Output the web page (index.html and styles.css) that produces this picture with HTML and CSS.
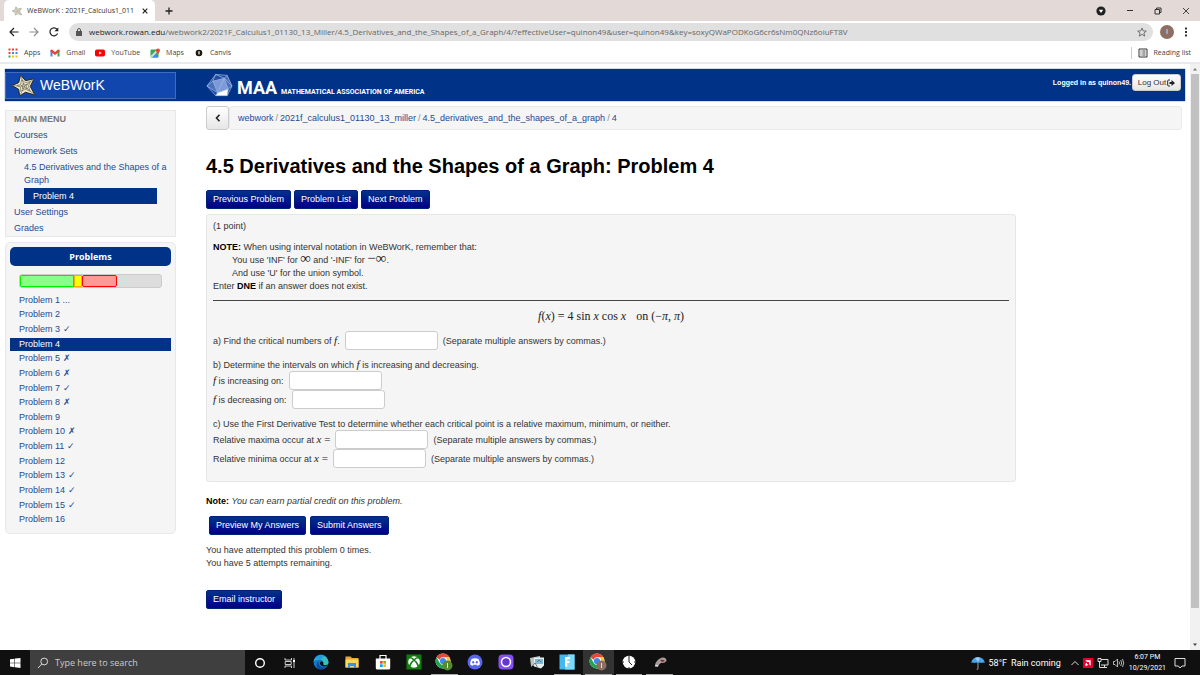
FILE: index.html
```html
<!DOCTYPE html>
<html lang="en">
<head>
<meta charset="utf-8">
<title>WeBWorK : 2021F_Calculus1_01130_13_Miller</title>
<link rel="stylesheet" href="styles.css">
</head>
<body>
<svg class="defs" aria-hidden="true">
  <symbol id="web" viewBox="0 0 26 24">
    <path d="M10 1 15 7 24 5 20 13 25 22 15 19 9 23 8 16 1 12 8 9Z" fill="#f1ecd2" stroke="#26221a" stroke-width="1"/>
    <path d="M10 1 14 13M24 5 14 13M25 22 14 13M9 23 14 13M1 12 14 13M11 6 15 9 20 8 18 13 20 18 15 16 10 18 10 14 6 12 10 11ZM12.500 10 15 11 17 10.500 16 13 17 15.500 14 14.500 12 15.500 12 13 10.500 12 12.500 11.500Z" fill="none" stroke="#6a644c" stroke-width=".7"/>
  </symbol>
  <symbol id="chrome" viewBox="0 0 18 18">
    <circle cx="8" cy="8" r="7.500" fill="#fff"/>
    <path d="M1.500 4.300A7.500 7.500 0 0 1 14.500 4.300H8A3.700 3.700 0 0 0 4.600 6.700Z" fill="#e6483a"/>
    <path d="M14.500 4.300A7.500 7.500 0 0 1 8 15.500L11.200 10A3.700 3.700 0 0 0 10 4.300Z" fill="#f9c82d"/>
    <path d="M1.500 4.300A7.500 7.500 0 0 0 8 15.500L11.200 9.900A3.700 3.700 0 0 1 4.800 9.900Z" fill="#26a353"/>
    <circle cx="8" cy="8" r="3.100" fill="#4285f4"/>
  </symbol>
</svg>

<header class="browser">
  <div class="tabs">
    <div class="tab">
      <svg class="i10 faded" viewBox="0 0 26 24"><use href="#web"/></svg>
      <span class="tab-title">WeBWorK : 2021F_Calculus1_011</span>
      <button class="plain" aria-label="Close tab"><svg class="i6" viewBox="0 0 6 6"><path d="M.7.7 5.300 5.300M5.300.7.7 5.300" stroke="#222" stroke-width="1.200"/></svg></button>
    </div>
    <button class="plain new-tab" aria-label="New tab"><svg class="i8" viewBox="0 0 8 8"><path d="M4 .5v7M.5 4h7" stroke="#222" stroke-width="1.300"/></svg></button>
    <div class="window-controls">
      <svg class="i10" viewBox="0 0 10 10"><circle cx="5" cy="5" r="4.600" fill="#1f2023"/><path d="M2.800 3.800h4.400L5 7Z" fill="#fff"/></svg>
      <button class="plain" aria-label="Minimize"><svg class="i8" viewBox="0 0 8 8"><path d="M1 3.500h6" stroke="#333"/></svg></button>
      <button class="plain" aria-label="Restore"><svg class="i8" viewBox="0 0 8 8"><path d="M1 2.500h4.500V7H1ZM2.500 2.500V1H7v4.500H5.500" fill="none" stroke="#333"/></svg></button>
      <button class="plain" aria-label="Close"><svg class="i8" viewBox="0 0 8 8"><path d="M1 1 7 7M7 1 1 7" stroke="#333" stroke-width=".9"/></svg></button>
    </div>
  </div>
  <div class="toolbar">
    <button class="plain" aria-label="Back"><svg class="i10" viewBox="0 0 10 10"><path d="M9.500 5H1M5 1 1 5 5 9" fill="none" stroke="#222" stroke-width="1.200"/></svg></button>
    <button class="plain" aria-label="Forward"><svg class="i10" viewBox="0 0 10 10"><path d="M.5 5H9M5 1 9 5 5 9" fill="none" stroke="#909090" stroke-width="1.200"/></svg></button>
    <button class="plain" aria-label="Reload"><svg class="i10" viewBox="0 0 10 10"><path d="M8.600 6.500A4 4 0 1 1 8 2.200" fill="none" stroke="#222" stroke-width="1.200"/><path d="M9.300.4V4.300H5.400Z" fill="#222"/></svg></button>
    <div class="address">
      <svg class="i8" viewBox="0 0 8 8"><path d="M1 3h6v5H1Z" fill="#555"/><path d="M2.500 3.500V2a1.500 1.500 0 0 1 3 0v1.500" fill="none" stroke="#555"/></svg>
      <span class="url"><b>webwork.rowan.edu</b>/webwork2/2021F_Calculus1_01130_13_Miller/4.5_Derivatives_and_the_Shapes_of_a_Graph/4/?effectiveUser=quinon49&amp;user=quinon49&amp;key=soxyQWaPODKoG6cr6sNm0QNz6oiuFT8V</span>
      <svg class="i10" viewBox="0 0 10 10"><path d="M5 1 6.200 3.900 9.300 4.100 6.900 6.100 7.700 9.100 5 7.400 2.300 9.100 3.100 6.100.7 4.100 3.800 3.900Z" fill="none" stroke="#555" stroke-width=".8"/></svg>
    </div>
    <span class="avatar">I</span>
    <button class="plain" aria-label="Browser menu"><svg class="i10" viewBox="0 0 10 10"><path d="M4 .5h2v2H4ZM4 4h2v2H4ZM4 7.500h2v2H4Z" fill="#333"/></svg></button>
  </div>
  <nav class="bookmarks">
    <a href="#apps"><svg class="i10" viewBox="0 0 10 10"><path d="M.5.5h2v2h-2ZM4 .5h2v2H4Z" fill="#ea4335"/><path d="M7.500.5h2v2h-2ZM.5 4h2v2h-2Z" fill="#e5473a"/><path d="M4 4h2v2H4ZM7.500 4h2v2h-2Z" fill="#4285f4"/><path d="M.5 7.500h2v2h-2Z" fill="#34a853"/><path d="M4 7.500h2v2H4ZM7.500 7.500h2v2h-2Z" fill="#fbbc04"/></svg>Apps</a>
    <a href="#gmail"><svg class="i10" viewBox="0 0 10 10"><path d="M.5 2v6.500h2V4Z" fill="#4285f4"/><path d="M9.500 2v6.500h-2V4Z" fill="#34a853"/><path d="M.5 2 2 1.500 5 4 8 1.500 9.500 2v1.500L5 7 .5 3.500Z" fill="#ea4335"/></svg>Gmail</a>
    <a href="#youtube"><svg class="i10" viewBox="0 0 10 10"><rect y="1.500" width="10" height="7" rx="1.800" fill="#f00"/><path d="M4 3.500 6.800 5 4 6.500Z" fill="#fff"/></svg>YouTube</a>
    <a href="#maps"><svg class="i10" viewBox="0 0 10 10"><rect x=".5" y="1.500" width="8" height="8" rx="1" fill="#34a853"/><path d="M1 9.500 5 5.500 8.500 9.500Z" fill="#4285f4"/><path d="M.5 8 6 2.500 7.500 4 2 9.500H.5Z" fill="#c9d8e8"/><path d="M8 6.500C7.700 4.800 6 4 6 2.400a2 2 0 0 1 4 0C10 4 8.300 4.800 8 6.500Z" fill="#ea4335"/></svg>Maps</a>
    <a href="#canvis"><svg class="i10" viewBox="0 0 10 10"><circle cx="5" cy="5" r="3.300" fill="#1c1710"/><path d="M4.300 3.300h1.400v2.400L5 7l-.7-1.300Z" fill="#f4e6c0"/></svg>Canvis</a>
    <a class="reading" href="#reading"><svg class="i10" viewBox="0 0 10 10"><path d="M1 1h8v8H1Z" fill="none" stroke="#333"/><path d="M2.500 3h1M2.500 5h1M2.500 7h1M4.300 3h3.200M4.300 5h3.200M4.300 7h3.200" stroke="#333" stroke-width=".9"/></svg>Reading list</a>
  </nav>
</header>

<div class="viewport">
  <div class="page">
    <header class="masthead">
      <a class="logo" href="#home"><svg class="logo-web" viewBox="0 0 26 24"><use href="#web"/></svg>WeBWorK</a>
      <a class="maa" href="#maa">
        <svg class="maa-mark" viewBox="0 0 28 25"><path d="M10 1 22 2 27 13 22 23H10L1 13Z" fill="#1e4da0"/><path d="M7 8 19 5 23 16 12 20Z" fill="#7c9ad8"/><path d="M19 5 22 2 27 13 23 16ZM7 8 1 13 12 20Z" fill="#4a70bd"/><path d="M12 20 23 16 22 23H10Z" fill="#fff"/><path d="M10 1 22 2 27 13 22 23H10L1 13ZM10 1 7 8 19 5 22 2M7 8 1 13 12 20 7 8M19 5 12 20 23 16 19 5M23 16 27 13M10 1 19 5 27 13M12 20 10 23M23 16 22 23" fill="none" stroke="#a9bde6" stroke-width=".7"/></svg>
        <span class="maa-big">MAA</span><span class="maa-name">MATHEMATICAL ASSOCIATION OF AMERICA</span>
      </a>
      <div class="session">Logged in as quinon49.
        <button class="btn-light">Log Out<svg class="i8" viewBox="0 0 8 8"><path d="M3 1H1.500Q.7 1 .7 2v4q0 1 .8 1H3" fill="none" stroke="#222"/><path d="M2.500 3h2V1L8 4 4.500 7V5h-2Z" fill="#222"/></svg></button>
      </div>
    </header>

    <div class="columns">
      <aside class="sidebar">
        <nav class="menu">
          <h2>MAIN MENU</h2>
          <ul>
            <li><a href="#courses">Courses</a></li>
            <li><a href="#sets">Homework Sets</a></li>
            <li class="sub"><a href="#set">4.5 Derivatives and the Shapes of a Graph</a></li>
            <li class="sub current"><a href="#p4">Problem 4</a></li>
            <li><a href="#settings">User Settings</a></li>
            <li><a href="#grades">Grades</a></li>
          </ul>
        </nav>
        <nav class="problems">
          <h2>Problems</h2>
          <div class="progress"><span class="done"></span><span class="pending"></span><span class="wrong"></span></div>
          <ul>
            <li><a href="#p1">Problem 1 ...</a></li>
            <li><a href="#p2">Problem 2</a></li>
            <li><a href="#p3">Problem 3 ✓</a></li>
            <li class="current"><a href="#p4">Problem 4</a></li>
            <li><a href="#p5">Problem 5 ✗</a></li>
            <li><a href="#p6">Problem 6 ✗</a></li>
            <li><a href="#p7">Problem 7 ✓</a></li>
            <li><a href="#p8">Problem 8 ✗</a></li>
            <li><a href="#p9">Problem 9</a></li>
            <li><a href="#p10">Problem 10 ✗</a></li>
            <li><a href="#p11">Problem 11 ✓</a></li>
            <li><a href="#p12">Problem 12</a></li>
            <li><a href="#p13">Problem 13 ✓</a></li>
            <li><a href="#p14">Problem 14 ✓</a></li>
            <li><a href="#p15">Problem 15 ✓</a></li>
            <li><a href="#p16">Problem 16</a></li>
          </ul>
        </nav>
      </aside>

      <main class="main">
        <div class="crumbs">
          <button class="btn-light back" aria-label="Up one level"><svg class="i8" viewBox="0 0 8 8"><path d="M5.500.8 2.500 4l3 3.200" fill="none" stroke="#222" stroke-width="1.600"/></svg></button>
          <nav class="trail"><a href="#webwork">webwork</a><i>/</i><a href="#course">2021f_calculus1_01130_13_miller</a><i>/</i><a href="#set">4.5_derivatives_and_the_shapes_of_a_graph</a><i>/</i><a href="#p4">4</a></nav>
        </div>
        <h1>4.5 Derivatives and the Shapes of a Graph: Problem 4</h1>
        <div class="buttons">
          <button class="btn">Previous Problem</button><button class="btn">Problem List</button><button class="btn">Next Problem</button>
        </div>

        <form class="problem">
          <p class="points">(1 point)</p>
          <p><strong>NOTE:</strong> When using interval notation in WeBWorK, remember that:</p>
          <p class="indent">You use 'INF' for <span class="m inf">∞</span> and '-INF' for <span class="m inf">−∞</span>.</p>
          <p class="indent">And use 'U' for the union symbol.</p>
          <p>Enter <strong>DNE</strong> if an answer does not exist.</p>
          <hr>
          <p class="formula"><i>f</i>(<i>x</i>) = 4 sin <i>x</i> cos <i>x</i><span class="quad"></span>on (−<i>π</i>, <i>π</i>)</p>
          <div class="row"><label for="crit">a) Find the critical numbers of <i class="m">f</i>.</label><input id="crit" type="text"><span>(Separate multiple answers by commas.)</span></div>
          <p class="part">b) Determine the intervals on which <i class="m">f</i> is increasing and decreasing.</p>
          <div class="row"><label for="inc"><i class="m">f</i> is increasing on:</label><input id="inc" type="text"></div>
          <div class="row"><label for="dec"><i class="m">f</i> is decreasing on:</label><input id="dec" type="text"></div>
          <p class="part">c) Use the First Derivative Test to determine whether each critical point is a relative maximum, minimum, or neither.</p>
          <div class="row"><label for="max">Relative maxima occur at <span class="m"><i>x</i> =</span></label><input id="max" type="text"><span>(Separate multiple answers by commas.)</span></div>
          <div class="row"><label for="min">Relative minima occur at <span class="m"><i>x</i> =</span></label><input id="min" type="text"><span>(Separate multiple answers by commas.)</span></div>
        </form>

        <p class="note"><strong>Note:</strong> <em>You can earn partial credit on this problem.</em></p>
        <div class="buttons submit">
          <button class="btn">Preview My Answers</button><button class="btn">Submit Answers</button>
        </div>
        <p>You have attempted this problem 0 times.<br>You have 5 attempts remaining.</p>
        <div class="buttons email"><button class="btn">Email instructor</button></div>
      </main>
    </div>
  </div>
  <div class="scrollbar">
    <svg class="i6" viewBox="0 0 6 6"><path d="M1 4.500 3 2l2 2.500Z" fill="#777"/></svg>
    <span class="thumb"></span>
    <svg class="i6" viewBox="0 0 6 6"><path d="M1 1.500 3 4l2-2.500Z" fill="#444"/></svg>
  </div>
</div>

<footer class="taskbar">
  <button class="plain start" aria-label="Start"><svg class="i12" viewBox="0 0 12 12"><path d="M1 2.300 5.500 1.700v4H1ZM6 1.600 11.500.9v4.800H6ZM1 6.200h4.500v4L1 9.600ZM6 6.200h5.500V11L6 10.300Z" fill="#fff"/></svg></button>
  <label class="search"><svg class="i12" viewBox="0 0 12 12"><circle cx="7.200" cy="4.500" r="3.400" fill="none" stroke="#ddd"/><path d="M4.800 7 1 11" stroke="#ddd"/></svg><input type="text" placeholder="Type here to search" aria-label="Type here to search"></label>
  <div class="tools">
    <button class="plain" aria-label="Cortana"><svg class="i12" viewBox="0 0 12 12"><circle cx="6" cy="6" r="4.300" fill="none" stroke="#fff" stroke-width="1.400"/></svg></button>
    <button class="plain" aria-label="Task view"><svg class="i12" viewBox="0 0 12 12"><path d="M1 1v2h6.500V1M1.200 4.500h6v3h-6ZM1 11V9h6.500v2M10 1v10" fill="none" stroke="#ccc"/><path d="M9 3h2v2H9Z" fill="#fff"/></svg></button>
  </div>
  <div class="apps">
    <button class="plain" aria-label="Edge"><svg class="i16" viewBox="0 0 16 16"><circle cx="8" cy="8" r="7.500" fill="#1576cc"/><path d="M.6 8A7.500 7.500 0 0 1 15.500 8c0 2.500-2 3.500-4 3.300-1.700-.2-1.800-1-1.300-1.800C11 7.500 9 5.500 6.500 5.500 3.500 5.500 1 6.500.6 8Z" fill="#35c1b8"/><path d="M.6 7.500C1.500 4.500 5.500 4 8 5.500L11 2C6 .5 1.500 3 .6 7.500Z" fill="#249de0"/><path d="M6 7.500C4.500 11 8 14.500 13 13a7.500 7.500 0 0 1-7.500 2C3 12.500 3 8.500 6 7.500Z" fill="#0c4b9a"/><path d="M7 8.500c-.5 2.500 2.500 5 7 3.500l1-1.500c-2 1.300-5.500 1-4.700-1C11 8 8 6.500 7 8.500Z" fill="#101010"/></svg></button>
    <button class="plain" aria-label="File Explorer"><svg class="i16" viewBox="0 0 16 16"><path d="M1.500 2.500h5L8 4h6.500v9.500h-13Z" fill="#e9a92d"/><path d="M1.500 5.500h13v8h-13Z" fill="#fbd667"/><path d="M4 9h8v5h-2v-2H6v2H4Z" fill="#3f8fd8"/></svg></button>
    <button class="plain" aria-label="Store"><svg class="i16" viewBox="0 0 16 16"><path d="M5 5V1.500h6V5" fill="none" stroke="#fff" stroke-width="1.200"/><path d="M.8 4.500h14.400V14q0 1.500-1.500 1.500H2.300Q.8 15.500.8 14Z" fill="#fff"/><path d="M5 7h2.700v2.700H5Z" fill="#f25022"/><path d="M8.300 7H11v2.700H8.300Z" fill="#7fba00"/><path d="M5 10.300h2.700V13H5Z" fill="#00a4ef"/><path d="M8.300 10.300H11V13H8.300Z" fill="#ffb900"/></svg></button>
    <button class="plain" aria-label="Xbox"><svg class="i16" viewBox="0 0 16 16"><path d="M.5.5h15v15H.5Z" fill="#107c10"/><circle cx="8" cy="8" r="5.800" fill="#fff"/><path d="M3.500 13C4 10 6 7.500 8 6c2 1.500 4 4 4.500 7M3 3.500C5 3.500 7 4.700 8 6c1-1.300 3-2.500 5-2.500" fill="none" stroke="#107c10" stroke-width="1.500"/></svg></button>
    <button class="plain open" aria-label="Chrome"><svg class="i18" viewBox="0 0 18 18"><use href="#chrome"/><circle cx="12.500" cy="12.500" r="5" fill="#558b2f"/><path d="M12.500 10v5" stroke="#dfe9d4"/></svg></button>
    <button class="plain" aria-label="Discord"><svg class="i16" viewBox="0 0 16 16"><circle cx="8" cy="8" r="7.500" fill="#5865f2"/><path d="M4.500 5Q8 3.500 11.500 5 13 7.500 12.800 10.500q-1 1-2.500 1.200l-.7-1H6.400l-.7 1Q4.200 11.500 3.200 10.500 3 7.500 4.500 5Z" fill="#fff"/><ellipse cx="6.200" cy="8.300" rx="1" ry="1.200" fill="#5865f2"/><ellipse cx="9.800" cy="8.300" rx="1" ry="1.200" fill="#5865f2"/></svg></button>
    <button class="plain" aria-label="Recorder"><svg class="i16" viewBox="0 0 16 16"><rect x=".5" y=".5" width="15" height="15" rx="4" fill="#8550ee"/><circle cx="8" cy="8" r="4.500" fill="#6637cf" stroke="#fff" stroke-width="1.500"/></svg></button>
    <button class="plain" aria-label="Cards"><svg class="i16" viewBox="0 0 16 16"><path d="M1 4 11 2l1 9-10 1Z" fill="#bcc3c6"/><path d="M5 3.500h10v8l-3 3-7-2Z" fill="#e6edf0"/><path d="M6 5h8v5H6Z" fill="#7cb9d3"/><path d="m2 13 4-4 3 5M8 8l2-2 2 2" fill="none" stroke="#69757b"/></svg></button>
    <button class="plain open" aria-label="Fortnite"><svg class="i16" viewBox="0 0 16 16"><path d="M.5.5h15v15H.5Z" fill="#41b8ee"/><path d="M9 .5h6.500v15H6Z" fill="#7cd9fa"/><path d="M6 3h5v2.200H8.300V7h2.200v2H8.300v4L6 12.500Z" fill="#fff"/></svg></button>
    <button class="plain open active" aria-label="Chrome"><svg class="i18" viewBox="0 0 18 18"><use href="#chrome"/><circle cx="12.500" cy="12.500" r="5" fill="#8d6e63"/><path d="M12.500 10v5" stroke="#e6dedb"/></svg></button>
    <button class="plain open" aria-label="Clock"><svg class="i16" viewBox="0 0 16 16"><circle cx="8" cy="8" r="6.300" fill="#fff"/><path d="M8 3v5l3 3M8 2v1M8 13v1M2 8h1M13 8h1" fill="none" stroke="#222"/></svg></button>
    <button class="plain open" aria-label="Game"><svg class="i16" viewBox="0 0 16 16"><path d="M3 12C3 8 7 4 11 3.500q3.500 0 3.500 3.500-2 2.500-5 1.800-2.500.7-3 3.200-1.500 2-3.500 0Z" fill="#a99e9c"/><path d="M8 6q3-1 5 1l-3 1Z" fill="#7d2a2e"/><path d="M3 12q2-1 3 0" stroke="#eee" fill="none"/></svg></button>
  </div>
  <div class="tray">
    <span class="weather"><svg class="i14" viewBox="0 0 14 14"><path d="M7 5v7q0 1.500-1.300 1.300" fill="none" stroke="#8a8a8a" stroke-width="1.200"/><path d="M.3 7A6.700 6 0 0 1 13.700 7Q12 5.800 10.500 7 9 5.800 7 7 5 5.800 3.500 7 2 5.800.3 7Z" fill="#4ba5ea"/><path d="M4 2Q7 .5 9 2L7 6Z" fill="#9ad0f7"/></svg><span>58°F</span><span>Rain coming</span></span>
    <svg class="i8" viewBox="0 0 8 8"><path d="M.5 6 4 2.500 7.500 6" fill="none" stroke="#ddd"/></svg>
    <svg class="i10" viewBox="0 0 10 10"><path d="M0 0h10v10H0Z" fill="#e4002b"/><path d="M2.300 2.300h5.400v5.400L6 6V4H4Z" fill="#fff"/><path d="M4 4.500v1.700h1.500L4 7.700H2.300V6Z" fill="#fff"/></svg>
    <svg class="i12" viewBox="0 0 12 12"><path d="M4 2.500h7v5.500H4M1 1.500h3v3H1ZM2.500 4.500v6h3M7.500 8v2.500M5 10.500h5" fill="none" stroke="#ddd"/></svg>
    <svg class="i12" viewBox="0 0 12 12"><path d="M.5 4.500H2L4.500 2v8L2 7.500H.5ZM6 4.500q1 1.500 0 3M7.700 3q2 3 0 6M9.500 2q2.500 4 0 8" fill="none" stroke="#ddd" stroke-width=".8"/></svg>
    <span class="clock">6:07 PM<br>10/29/2021</span>
    <svg class="i12 notices" viewBox="0 0 12 12"><path d="M1 1.500h10v7.500H8L6 11 4.500 9H1Z" fill="none" stroke="#ddd"/></svg>
  </div>
</footer>
</body>
</html>
```
FILE: styles.css
```css
* { box-sizing: border-box; }
body {
  margin: 0;
  min-height: 100vh;
  display: flex;
  flex-direction: column;
  background: #fff;
  color: #333;
  font: 9px/13px "Liberation Sans", Arial, sans-serif;
}
p, h1, h2, ul { margin: 0; padding: 0; }
ul { list-style: none; }
a { color: #1f4a91; text-decoration: none; }
svg { display: block; flex: none; }
input, button { font: inherit; }
strong { color: #000; }
.defs { position: absolute; width: 0; height: 0; }
.plain { display: flex; align-items: center; justify-content: center; padding: 0; border: 0; background: none; }
.i6 { width: 6px; height: 6px; }
.i8 { width: 8px; height: 8px; }
.i10 { width: 10px; height: 10px; }
.i12 { width: 12px; height: 12px; }
.i14 { width: 14px; height: 14px; }
.i16 { width: 16px; height: 16px; }
.i18 { width: 18px; height: 18px; }

/* Browser frame */
.browser { font: 7px/12px "Open Sans", sans-serif; border-bottom: 2px solid #e8eaed; }
.tabs { display: flex; align-items: center; height: 21px; background: #e3dad7; }
.tab { display: flex; align-items: center; align-self: stretch; gap: 5px; width: 151px; margin-left: 4px; padding: 0 7px 0 8px; background: #fff; border-radius: 5px 5px 0 0; }
.tab-title { flex: 1; white-space: nowrap; }
.faded { opacity: .7; }
.new-tab { margin-left: 10px; }
.window-controls { display: flex; align-items: center; gap: 20px; margin-left: auto; padding-right: 10px; }
.toolbar { display: flex; align-items: center; gap: 10px; height: 22px; padding: 0 9px; }
.address { display: flex; align-items: center; flex: 1; gap: 6px; height: 18px; padding: 0 6px; border-radius: 9px; background: #e0e0e0; color: #666; font-size: 8px; }
.url { flex: 1; white-space: nowrap; }
.url b { color: #222; font-weight: 400; }
.avatar { width: 14px; height: 14px; border-radius: 50%; background: #8d6e63; color: #fff; line-height: 14px; text-align: center; margin: 0 -3px; }
.bookmarks { display: flex; align-items: center; gap: 10px; height: 19px; padding: 0 9px 0 8px; }
.bookmarks a { display: flex; align-items: center; gap: 6px; color: #444; }
.bookmarks .reading { margin-left: auto; padding-left: 6px; border-left: 1px solid #ccc; }

/* Page area */
.viewport { display: flex; flex: 1; }
.page { flex: 1; padding: 5px 5px 0; }
.masthead { display: flex; align-items: center; height: 32px; background: #038; margin-bottom: 5px; box-shadow: 0 0 1px #038; }
.logo { display: flex; align-items: center; gap: 4px; width: 171px; height: 27px; padding-left: 5px; background: #1046ad; border: 1px solid #416bbb; color: #fff; font-size: 14px; }
.logo-web { width: 25px; height: 23px; }
.maa { display: flex; align-items: flex-end; margin-left: 30px; color: #fff; font-family: Roboto, sans-serif; font-weight: 700; }
.maa-mark { width: 27px; height: 25px; }
.maa-big { margin: 0 4px; font-size: 18px; line-height: 21px; }
.maa-name { font-size: 7px; line-height: 11px; }
.session { display: flex; align-items: center; align-self: flex-start; gap: 1px; margin: 5px 4px 0 auto; color: #fff; font-size: 7px; font-weight: 700; }
.btn-light { display: flex; align-items: center; justify-content: center; gap: 1px; height: 17px; padding: 0 5px; border: 1px solid #ccc; border-radius: 3px; background: linear-gradient(#fff, #e6e6e6); color: #333; font-weight: 400; }
.session .btn-light { width: 49px; padding: 0; font-size: 8px; }

.columns { display: flex; gap: 30px; }
.sidebar { flex: 0 0 171px; padding-top: 4px; }
.menu { padding: 0 3px 0 8px; border: 1px solid #e8e8e8; background: #f5f5f5; }
.menu h2 { padding: 2px 0 1px; font-size: 9px; line-height: 13px; color: #777; }
.menu li { padding: 2px 0 1px; }
.menu .sub { margin-left: 10px; }
.menu .current { margin-right: 15px; padding-left: 9px; }
.current { background: #038; }
.current a { color: #fff; }
.problems { margin-top: 5px; padding: 4px 4px 6px; border: 1px solid #e8e8e8; border-radius: 5px; background: #f5f5f5; }
.problems h2 { height: 19px; border-radius: 5px; background: #038; color: #fff; font: 700 9px/19px "Open Sans", sans-serif; text-align: center; }
.progress { display: flex; height: 14px; margin: 8px 9px 5px; border: 1px solid #ccc; border-radius: 3px; background: #ddd; overflow: hidden; }
.done { width: 38%; background: #8f8; border: 1px solid #0e0; }
.pending { width: 6%; background: #ff0; border: 1px solid #fa0; }
.wrong { width: 25%; background: #f99; border: 1px solid #f00; border-radius: 2px; }
.problems ul { display: grid; grid-auto-rows: 1fr; align-items: center; height: 234px; }
.problems li { height: 13px; padding-left: 9px; line-height: 13px; }

.main { flex: 1; padding-right: 3px; }
.crumbs { display: flex; }
.back { width: 23px; height: 24px; }
.trail { flex: 1; height: 24px; padding-left: 8px; border: 1px solid #eaeaea; border-radius: 3px; background: #f5f5f5; line-height: 22px; }
.trail i { margin: 0 2px; color: #888; font-style: normal; }
h1 { margin: 24px 0 11px; color: #000; font-size: 20px; line-height: 25px; }
.buttons { display: flex; gap: 3px; }
.btn { height: 19px; padding: 0 6px; border: 1px solid #00207a; border-radius: 2px; background: linear-gradient(#038, #008); color: #fff; }
.problem { width: 83%; margin-top: 5px; padding: 5px 6px 13px; border: 1px solid #e6e6e6; border-radius: 3px; background: #f5f5f5; }
.points { margin-bottom: 8px; }
.indent { padding-left: 19px; }
.problem hr { height: 1px; margin: 7px 0 9px; border: 0; background: #444; }
.m, .formula { color: #222; font-family: "Liberation Serif", serif; }
.m { font-size: 11px; line-height: 1px; }
.inf { font-size: 15px; }
.formula { margin-bottom: 9px; font-size: 12px; line-height: 12px; text-align: center; }
.quad { display: inline-block; width: 10px; }
.row { display: flex; align-items: center; gap: 5px; line-height: 12px; }
.row input { width: 93px; height: 19px; padding: 0 4px; border: 1px solid #ccc; border-radius: 3px; background: #fff; }
.part { margin-top: 9px; line-height: 12px; }
.note { margin-top: 13px; }
.submit { margin: 8px 0 9px 3px; gap: 4px; }
.email { margin: 20px 0 8px; }

.scrollbar { display: flex; flex-direction: column; align-items: center; width: 10px; padding: 2px 0; background: #f1f1f1; }
.scrollbar .thumb { flex: 1; width: 8px; margin: 2px 0 34px; background: #c1c1c1; }

/* Taskbar */
.taskbar { display: flex; height: 25px; background: #101010; color: #fff; font: 9px/12px "Open Sans", sans-serif; }
.start { width: 30px; }
.search { display: flex; align-items: center; gap: 6px; width: 215px; padding-left: 7px; background: #3f3f3f; }
.search input { flex: 1; min-width: 0; padding: 0; border: 0; background: none; color: #fff; }
.search input::placeholder { color: #ccc; }
.tools { display: grid; grid-template-columns: 30px 30px; }
.apps { display: grid; grid-auto-flow: column; grid-auto-columns: 1fr; width: 369px; margin-left: 1px; }
.apps .plain { border-bottom: 1px solid transparent; }
.apps .open { border-image: linear-gradient(90deg, transparent 10%, #aaa 10%, #aaa 90%, transparent 90%) 1; border-style: solid; border-width: 0 0 1px; }
.apps .active { background: #333; }
.tray { display: flex; align-items: center; gap: 4px; margin-left: auto; padding-right: 14px; font-family: Roboto, sans-serif; }
.weather { display: flex; align-items: center; gap: 4px; margin-right: 6px; }
.clock { font-size: 7px; line-height: 11px; text-align: center; }
.notices { margin-left: 4px; }
```
